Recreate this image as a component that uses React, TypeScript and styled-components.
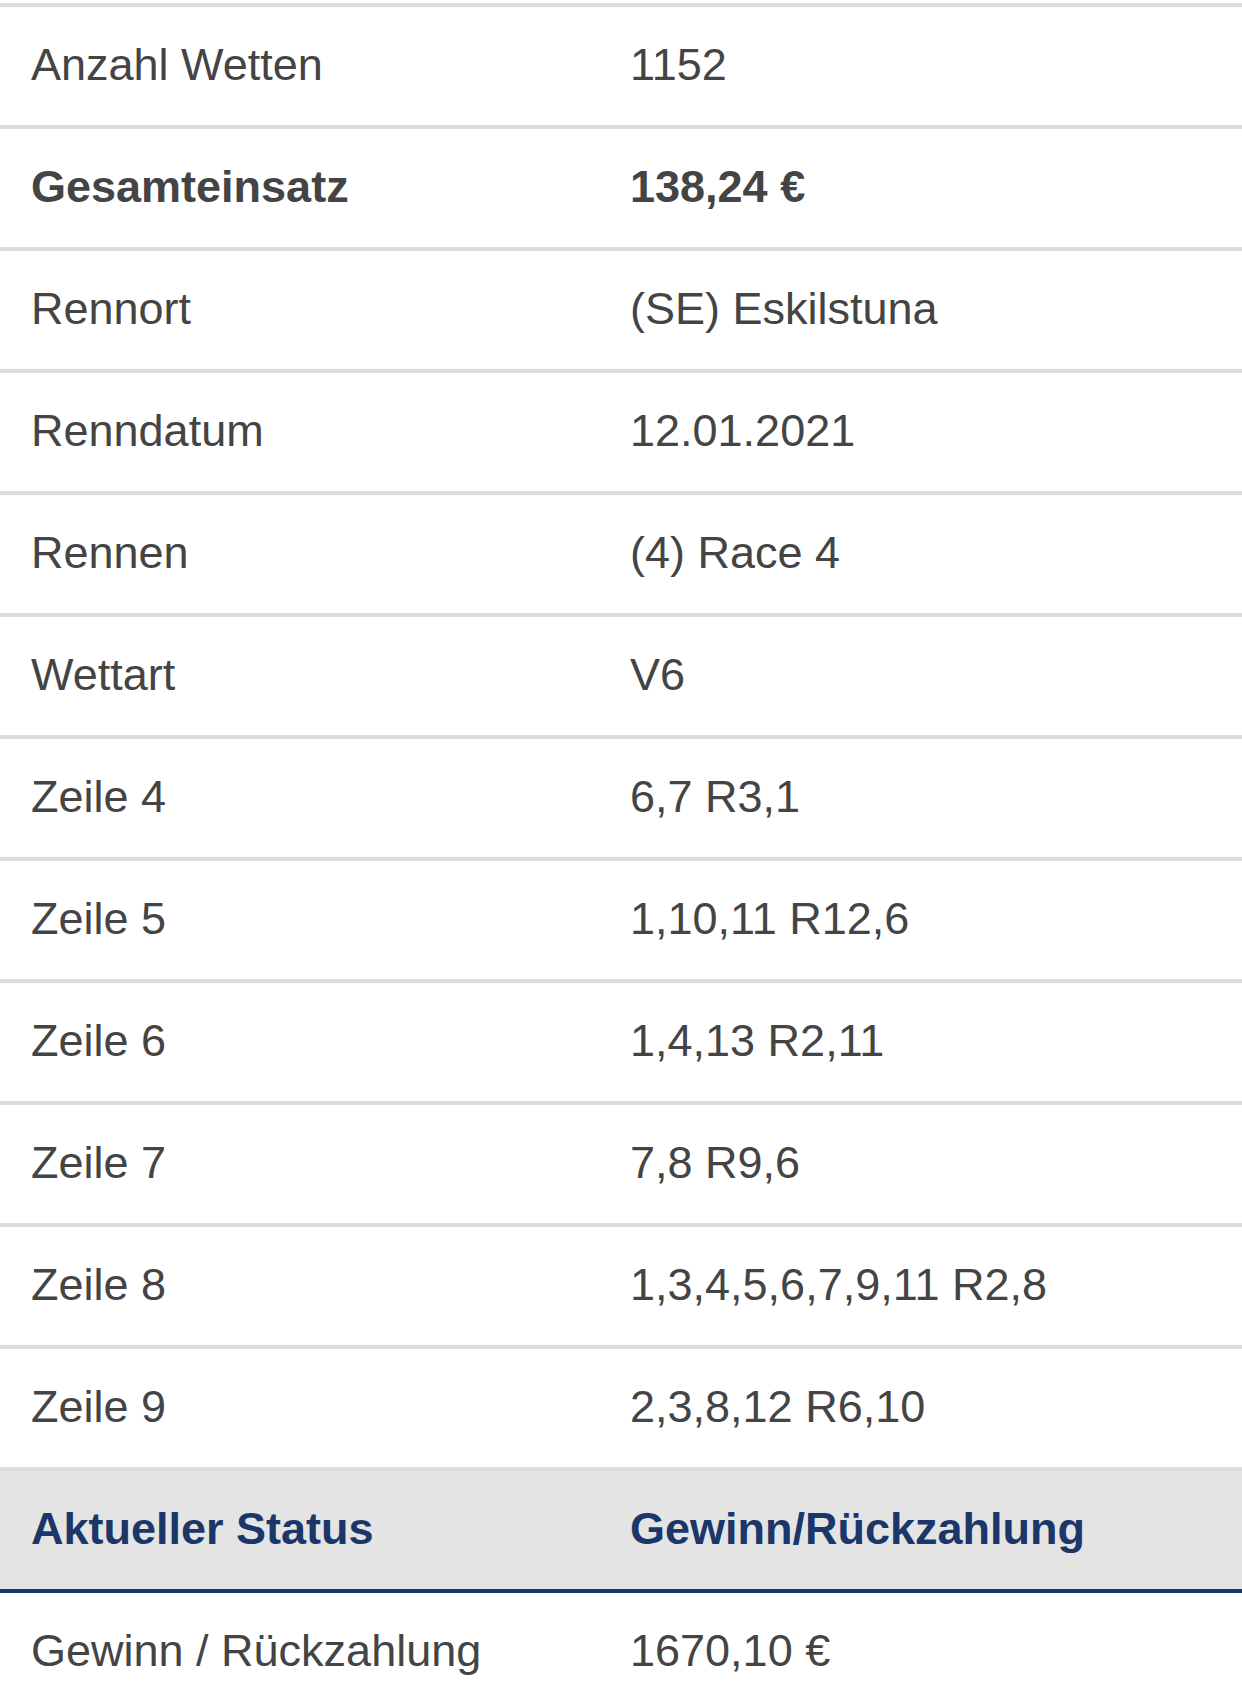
import React from "react";
import styled, { createGlobalStyle } from "styled-components";

const GlobalStyle = createGlobalStyle`
  html, body { margin: 0; padding: 0; background: #ffffff; }
  body { font-family: "Liberation Sans", Arial, Helvetica, sans-serif; color: #444444; }
`;

const Table = styled.div`
  display: flex;
  flex-direction: column;
  width: 1242px;
  padding-top: 3px;
`;

const Row = styled.div<{ $bold?: boolean }>`
  display: grid;
  grid-template-columns: 630px 1fr;
  align-items: center;
  height: 118px;
  border-top: 4px solid #dcdcdc;
  font-size: 45px;
  line-height: 1;
  font-weight: ${(p) => (p.$bold ? 700 : 400)};
  color: #444444;
`;

const HeaderRow = styled.div`
  display: grid;
  grid-template-columns: 630px 1fr;
  align-items: center;
  height: 118px;
  border-top: 4px solid #dcdcdc;
  border-bottom: 4px solid #1b3668;
  background: #e4e4e4;
  font-size: 45px;
  line-height: 1;
  font-weight: 700;
  color: #1b3668;
`;

const Label = styled.div`
  padding-left: 31px;
  margin-top: -3px;
  white-space: nowrap;
`;

const Value = styled.div`
  margin-top: -3px;
  white-space: nowrap;
`;

const rows: { label: string; value: string; bold?: boolean }[] = [
  { label: "Anzahl Wetten", value: "1152" },
  { label: "Gesamteinsatz", value: "138,24 €", bold: true },
  { label: "Rennort", value: "(SE) Eskilstuna" },
  { label: "Renndatum", value: "12.01.2021" },
  { label: "Rennen", value: "(4) Race 4" },
  { label: "Wettart", value: "V6" },
  { label: "Zeile 4", value: "6,7 R3,1" },
  { label: "Zeile 5", value: "1,10,11 R12,6" },
  { label: "Zeile 6", value: "1,4,13 R2,11" },
  { label: "Zeile 7", value: "7,8 R9,6" },
  { label: "Zeile 8", value: "1,3,4,5,6,7,9,11 R2,8" },
  { label: "Zeile 9", value: "2,3,8,12 R6,10" },
];

const LastRow = styled(Row)`
  border-top: none;
`;

export default function App() {
  return (
    <>
      <GlobalStyle />
      <Table>
        {rows.map((r) => (
          <Row key={r.label} $bold={r.bold}>
            <Label>{r.label}</Label>
            <Value>{r.value}</Value>
          </Row>
        ))}
        <HeaderRow>
          <Label>Aktueller Status</Label>
          <Value>Gewinn/Rückzahlung</Value>
        </HeaderRow>
        <LastRow>
          <Label>Gewinn / Rückzahlung</Label>
          <Value>1670,10 €</Value>
        </LastRow>
      </Table>
    </>
  );
}
